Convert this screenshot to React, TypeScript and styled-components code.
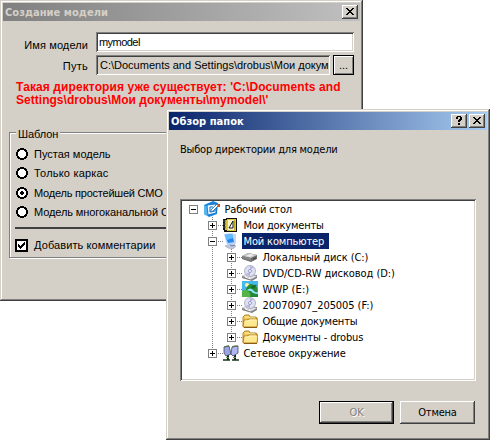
import React from 'react';
import styled, { createGlobalStyle, css } from 'styled-components';

const Global = createGlobalStyle`
  * { box-sizing: border-box; }
  body { margin: 0; background: #fff; overflow: hidden; }
`;

const face = '#d4d0c8';
const dialogFont = '"Liberation Sans", Arial, sans-serif';
const shellFont = '"DejaVu Sans Condensed", "DejaVu Sans", sans-serif';

const Desktop = styled.main`
  position: relative;
  width: 490px;
  height: 440px;
  overflow: hidden;
  background: #fff;
`;

const windowFrame = css`
  position: absolute;
  display: flex;
  flex-direction: column;
  padding: 3px;
  background: ${face};
  color: #000;
  box-shadow: inset -1px -1px #404040, inset 1px 1px ${face}, inset -2px -2px #808080, inset 2px 2px #fff;
`;

const ModelWindow = styled.section`
  ${windowFrame}
  left: 0;
  top: 0;
  width: 363px;
  height: 301px;
  font: 11px ${dialogFont};
`;

const BrowseWindow = styled.section`
  ${windowFrame}
  left: 166px;
  top: 109px;
  width: 324px;
  height: 331px;
  font: 11px ${shellFont};
`;

const TitleBar = styled.header<{ $active?: boolean }>`
  display: flex;
  flex: none;
  align-items: center;
  gap: 2px;
  height: 18px;
  padding: 0 2px;
  background: ${p => (p.$active ? 'linear-gradient(90deg, #0a246a, #a6caf0)' : 'linear-gradient(90deg, #808080, #c0c0c0)')};
  color: ${p => (p.$active ? '#fff' : '#d4d0c8')};
`;

const Title = styled.h1`
  flex: 1;
  height: 18px;
  margin: 0;
  font: bold 11px/20px ${shellFont};
  letter-spacing: 0.05px;
  white-space: nowrap;
`;

const CaptionButton = styled.button`
  display: flex;
  flex: none;
  width: 16px;
  height: 14px;
  padding: 0;
  border: 0;
  background: ${face};
  box-shadow: inset -1px -1px #404040, inset 1px 1px #fff, inset -2px -2px #808080;
`;

const Text = styled.span<{ $track?: number }>`
  white-space: pre;
  letter-spacing: ${p => p.$track ?? 0}px;
`;

const Fields = styled.div`
  display: grid;
  grid-template-columns: 85px 258px;
  column-gap: 8px;
  row-gap: 3px;
  margin-top: 11px;
`;

const FieldLabel = styled.label<{ $drop: number }>`
  padding-top: ${p => p.$drop}px;
  text-align: right;
  line-height: 20px;
  height: 20px;
`;

const FieldGroup = styled.div`
  display: flex;
  gap: 3px;
`;

const Field = styled.div<{ $locked?: boolean }>`
  flex: 1;
  height: 20px;
  padding: 0 3px 0 ${p => (p.$locked ? 4 : 3)}px;
  overflow: hidden;
  line-height: ${p => (p.$locked ? 21 : 20)}px;
  background: ${p => (p.$locked ? face : '#fff')};
  box-shadow: inset 1px 1px #808080, inset -1px -1px #fff, inset 2px 2px #404040, inset -2px -2px ${face};
`;

const BrowseButton = styled.button`
  flex: none;
  width: 21px;
  height: 20px;
  padding: 0;
  border: 1px solid #000;
  background: ${face};
  box-shadow: inset 1px 1px #fff, inset -1px -1px #808080;
  font: 11px/16px ${dialogFont};
  letter-spacing: 0;
`;

const Warning = styled.p`
  display: flex;
  flex-direction: column;
  margin: 6px 0 0 13px;
  color: #f00;
  font: bold 12px/13px ${dialogFont};
`;

const Template = styled.fieldset`
  display: flex;
  flex-direction: column;
  position: relative;
  width: 343px;
  height: 126px;
  margin: 25px 0 0 6px;
  padding: 0 0 0 5px;
  border: 1px solid #808080;
  box-shadow: 1px 1px #fff, inset 1px 1px #fff;
`;

const Legend = styled.div`
  align-self: flex-start;
  height: 14px;
  margin: -6px 0 0 1px;
  padding: 0 2px;
  background: ${face};
  line-height: 14px;
`;

const Options = styled.div`
  display: grid;
  grid-template-rows: 19px 20px 19px 20px;
  margin-top: 3px;
  padding-left: 1px;
`;

const Choice = styled.label`
  display: flex;
  align-items: center;
  gap: 6px;
  height: 20px;
`;

const Divider = styled.hr`
  width: 100%;
  height: 2px;
  margin: 5px 0 6px;
  border: 0;
  background: #404040;
`;

const Body = styled.div`
  display: flex;
  flex-direction: column;
  padding: 11px 11px 0;
`;

const Prompt = styled.p`
  margin: 0;
  height: 58px;
  line-height: 18px;
`;

const Tree = styled.div`
  width: 296px;
  height: 182px;
  padding: 2px 2px 2px 5px;
  background: #fff;
  box-shadow: inset 1px 1px #808080, inset -1px -1px #fff, inset 2px 2px #404040, inset -2px -2px ${face};
`;

const TreeRow = styled.div`
  display: flex;
  height: 16px;
`;

const Cell = styled.svg`
  display: block;
  flex: none;
`;

const NodeLabel = styled.span<{ $selected?: boolean; $track: number }>`
  height: 16px;
  margin-left: 3px;
  padding: 0 ${p => (p.$selected ? 5 : 2)}px 0 1.5px;
  line-height: 18px;
  letter-spacing: ${p => p.$track}px;
  white-space: pre;
  color: ${p => (p.$selected ? '#fff' : '#000')};
  background: ${p => (p.$selected ? '#0a246a' : 'transparent')};
`;

const Actions = styled.div`
  display: flex;
  justify-content: flex-end;
  gap: 6px;
  margin-top: 20px;
  padding-right: 1px;
`;

const PushButton = styled.button`
  width: 75px;
  height: 23px;
  padding: 1px 0 0;
  border: 0;
  background: ${face};
  color: #000;
  font: 11px/20px ${shellFont};
  letter-spacing: -0.2px;
  box-shadow: inset -1px -1px #404040, inset 1px 1px #fff, inset -2px -2px #808080;

  &:disabled {
    color: #808080;
    text-shadow: 1px 1px #fff;
    border: 1px solid #000;
    padding: 0;
  }
`;

const CloseGlyph = () => (
  <svg width="16" height="14" shapeRendering="crispEdges">
    <path d="M4 3h2v1h1v1h2v-1h1v-1h2v1h-1v1h-1v1h-1v1h1v1h1v1h1v1h-2v-1h-1v-1h-2v1h-1v1h-2v-1h1v-1h1v-1h1v-1h-1v-1h-1v-1h-1z" fill="#000" />
  </svg>
);

const HelpGlyph = () => (
  <svg width="16" height="14" shapeRendering="crispEdges">
    <path d="M6 2h4v1h1v3h-1v1h-1v1h-2v-2h1v-1h1v-2h-2v2h-2v-2h1zM7 9h2v2h-2z" fill="#000" />
  </svg>
);

const RadioMark = ({ checked }: { checked?: boolean }) => (
  <svg width="12" height="12">
    <g shapeRendering="crispEdges">
      <path d="M4 0h4v1h2v1h1v2h1v4h-1v2h-1v1h-2v1h-4v-1h-2v-1h-1v-2h-1v-4h1v-2h1v-1h2z" fill="#000" />
      <path d="M4 2h4v1h1v1h1v4h-1v1h-1v1h-4v-1h-1v-1h-1v-4h1v-1h1z" fill="#fff" />
      {checked && <path d="M5 4h2v1h1v2h-1v1h-2v-1h-1v-2h1z" fill="#000" />}
    </g>
  </svg>
);

const CheckMark = () => (
  <svg width="13" height="13" shapeRendering="crispEdges">
    <path d="M0 0h13v13H0z" />
    <path d="M2 2h9v9H2z" fill="#fff" />
    <path d="M3 5h1v1h1v1h1v-1h1v-1h1v-1h1v-1h1v3h-1v1h-1v1h-1v1h-1v1h-1v-1h-1v-1h-1z" />
  </svg>
);

type Branch = 'root' | 'mid' | 'last';

const Guide = () => (
  <Cell width="19" height="16" shapeRendering="crispEdges">
    <path d="M8.5 0V16" stroke="#808080" strokeDasharray="1 1" />
  </Cell>
);

const Expander = ({ branch, open }: { branch: Branch; open?: boolean }) => (
  <Cell width="19" height="16" shapeRendering="crispEdges">
    {branch !== 'root' && (
      <path d={`M8.5 0V${branch === 'mid' ? 16 : 8}M14 8.5H19`} stroke="#808080" strokeDasharray="1 1" fill="none" />
    )}
    <path d="M4.5 4.5h8v8h-8z" fill="#fff" stroke="#808080" />
    <path d={open ? 'M6 8.5h5' : 'M6 8.5h5M8.5 6v5'} stroke="#000" />
  </Cell>
);

const DesktopIcon = () => (
  <>
    <path d="M0 4l9-4 5 2-1 11-8 3-5-3z" fill="#1687dc" />
    <path d="M0 4l4 2v9l-4-2z" fill="#54b5f2" />
    <path d="M3 4l9-1v9l-8 2z" fill="#e9f5ff" stroke="#0a69c0" strokeWidth=".8" />
    <path d="M9 6H6v5l5-1V8" fill="none" stroke="#1b72bd" />
    <path d="M7 9l6-6 2 1-6 6-2 1z" fill="#fff" stroke="#1764a8" strokeWidth=".8" />
    <path d="M13 3h3v3h-2z" fill="#c95428" />
  </>
);

const DocumentsIcon = () => (
  <>
    <path d="M0 2h3V1h11v14H1v-2H0z" fill="#111" />
    <path d="M2 3h2v10H2z" fill="#d7c335" />
    <path d="M4 2h9v12H4z" fill="#d9c63b" />
    <path d="M5 3h7v10H5z" fill="#faf7ce" />
    <path d="M6 11l4-7v7z" fill="#fff" stroke="#111" />
    <path d="M0 4h3M0 7h3M0 10h3" stroke="#555" />
    <path d="M11 3h1v10h-1z" fill="#b8a71f" />
  </>
);

const ComputerIcon = () => (
  <>
    <path d="M2 13l6-2 5 2-3 3-5-1z" fill="#c2c9dc" stroke="#9098b0" strokeWidth=".5" />
    <path d="M10 1l3 0v9l-3 3z" fill="#c9d6ed" />
    <path d="M1 1l9-1 2 11-8 1z" fill="#b9d2f5" />
    <path d="M2 2l7-1 2 8-6 1z" fill="#2388ed" />
    <path d="M2 2l7-1 1 4-6 2z" fill="#62bdff" />
    <path d="M7 12l2 1 3-1" fill="none" stroke="#6180b2" />
  </>
);

const DiskIcon = () => (
  <>
    <path d="M0 7l6-3 9 2v4l-6 3-9-3z" fill="#696969" />
    <path d="M0 7l6-3 9 2-6 3z" fill="#c5c5c5" />
    <path d="M0 7l9 2v3l-9-3z" fill="#858585" />
    <path d="M4 7l4-2 4 1-4 2z" fill="#ececec" />
    <path d="M11 10l3-1" stroke="#3d3d3d" />
  </>
);

const DiscDriveIcon = () => (
  <>
    <path d="M0 11l4-2 11 1v3l-5 3-10-3z" fill="#808085" />
    <path d="M0 11l4-2 11 2-5 3z" fill="#dedee2" />
    <circle cx="8" cy="6" r="5.5" fill="#dedff1" stroke="#9a9bab" strokeWidth=".7" />
    <path d="M8 1v4l4-3zM8 7v4l-4-2z" fill="#b3b5e0" />
    <circle cx="8" cy="6" r="1.5" fill="#fff" stroke="#777db9" strokeWidth=".7" />
    <path d="M3 12l6 2" stroke="#f8f8f8" />
  </>
);

const LandscapeIcon = () => (
  <>
    <path d="M0 0h16v16H0z" fill="#43b9ed" />
    <circle cx="5" cy="4" r="2" fill="#fff2a0" />
    <path d="M4 8q2-5 6-5l5 3 1 8H5z" fill="#288b37" />
    <path d="M9 6q3-3 6-2-2 1-2 3l-4 1z" fill="#146c2a" />
    <path d="M0 10q4-3 7 1l3 5H0z" fill="#55b445" />
    <path d="M5 9q4-3 6 0t5 2v2q-5 0-7-3-3 0-4-1z" fill="#8ce4ff" />
    <path d="M9 12l7 2v2H8z" fill="#23873b" />
  </>
);

const FolderIcon = () => (
  <>
    <path d="M1 13V4l2-2h4l1 2h6l1 1v8z" fill="#f0ca57" stroke="#b5842c" />
    <path d="M3 4h4l1 1h5" stroke="#fff0b0" fill="none" />
    <path d="M1 14L2 7h3l2-1h9l-1 8z" fill="#ffe78e" stroke="#b98320" />
    <path d="M3 8h3l2-1h6" stroke="#fff8cc" fill="none" />
    <path d="M2 14.5h13" stroke="#8b5b17" />
  </>
);

const NetworkIcon = () => (
  <>
    <path d="M5 10v5M12 10v5" stroke="#222" strokeWidth="2" />
    <path d="M0 15h7M9 15h7" stroke="#163219" strokeWidth="1.5" />
    <path d="M3 12.5h3M10 12.5h3" stroke="#4b9a45" />
    <path d="M1 2l5-1 2 8-5 2-2-3z" fill="#9aa4e8" stroke="#3f4855" strokeWidth=".8" />
    <path d="M9 2l6-1 0 7-5 3-2-2z" fill="#aeb7f5" stroke="#3f4855" strokeWidth=".8" />
    <path d="M1 2l3-1h2M9 2l2-1h4" stroke="#55733c" fill="none" />
  </>
);

const icons = {
  desktop: DesktopIcon,
  documents: DocumentsIcon,
  computer: ComputerIcon,
  disk: DiskIcon,
  disc: DiscDriveIcon,
  landscape: LandscapeIcon,
  folder: FolderIcon,
  network: NetworkIcon,
};

interface TreeItem {
  text: string;
  icon: keyof typeof icons;
  level: number;
  branch: Branch;
  open?: boolean;
  selected?: boolean;
  track: number;
}

const items: TreeItem[] = [
  { text: 'Рабочий стол', icon: 'desktop', level: 0, branch: 'root', open: true, track: -0.18 },
  { text: 'Мои документы', icon: 'documents', level: 1, branch: 'mid', track: -0.18 },
  { text: 'Мой компьютер', icon: 'computer', level: 1, branch: 'mid', open: true, selected: true, track: -0.14 },
  { text: 'Локальный диск (C:)', icon: 'disk', level: 2, branch: 'mid', track: -0.08 },
  { text: 'DVD/CD-RW дисковод (D:)', icon: 'disc', level: 2, branch: 'mid', track: -0.07 },
  { text: 'WWP (E:)', icon: 'landscape', level: 2, branch: 'mid', track: 0.1 },
  { text: '20070907_205005 (F:)', icon: 'disc', level: 2, branch: 'mid', track: -0.07 },
  { text: 'Общие документы', icon: 'folder', level: 2, branch: 'mid', track: -0.15 },
  { text: 'Документы - drobus', icon: 'folder', level: 2, branch: 'last', track: -0.12 },
  { text: 'Сетевое окружение', icon: 'network', level: 1, branch: 'last', track: -0.12 },
];

const TreeNode = ({ item }: { item: TreeItem }) => {
  const Icon = icons[item.icon];
  return (
    <TreeRow>
      {item.level > 0 && <Cell width="19" height="16" />}
      {item.level > 1 && <Guide />}
      <Expander branch={item.branch} open={item.open} />
      <Cell width="16" height="16" viewBox="0 0 16 16"><Icon /></Cell>
      <NodeLabel $selected={item.selected} $track={item.track}>{item.text}</NodeLabel>
    </TreeRow>
  );
};

export default function App() {
  return (
    <Desktop>
      <Global />
      <ModelWindow>
        <TitleBar>
          <Title>Создание модели</Title>
          <CaptionButton aria-label="Закрыть"><CloseGlyph /></CaptionButton>
        </TitleBar>
        <Fields>
          <FieldLabel $drop={3}><Text $track={0.1}>Имя модели</Text></FieldLabel>
          <Field><Text $track={-0.55}>mymodel</Text></Field>
          <FieldLabel $drop={1}><Text $track={0.25}>Путь</Text></FieldLabel>
          <FieldGroup>
            <Field $locked><Text>C:\Documents and Settings\drobus\Мои докум</Text></Field>
            <BrowseButton>...</BrowseButton>
          </FieldGroup>
        </Fields>
        <Warning>
          <Text $track={0.1}>Такая директория уже существует: 'C:\Documents and</Text>
          <Text $track={0.03}>Settings\drobus\Мои документы\mymodel\'</Text>
        </Warning>
        <Template>
          <Legend><Text $track={-0.1}>Шаблон</Text></Legend>
          <Options>
            <Choice><RadioMark /><Text>Пустая модель</Text></Choice>
            <Choice><RadioMark /><Text $track={0.2}>Только каркас</Text></Choice>
            <Choice><RadioMark checked /><Text $track={-0.22}>Модель простейшей СМО</Text></Choice>
            <Choice><RadioMark /><Text $track={-0.1}>Модель многоканальной СМО</Text></Choice>
          </Options>
          <Divider />
          <Choice><CheckMark /><Text $track={0.1}>Добавить комментарии</Text></Choice>
        </Template>
      </ModelWindow>
      <BrowseWindow>
        <TitleBar $active>
          <Title>Обзор папок</Title>
          <CaptionButton aria-label="Справка"><HelpGlyph /></CaptionButton>
          <CaptionButton aria-label="Закрыть"><CloseGlyph /></CaptionButton>
        </TitleBar>
        <Body>
          <Prompt><Text $track={-0.22}>Выбор директории для модели</Text></Prompt>
          <Tree>
            {items.map(item => <TreeNode key={item.text} item={item} />)}
          </Tree>
          <Actions>
            <PushButton disabled>OK</PushButton>
            <PushButton>Отмена</PushButton>
          </Actions>
        </Body>
      </BrowseWindow>
    </Desktop>
  );
}
